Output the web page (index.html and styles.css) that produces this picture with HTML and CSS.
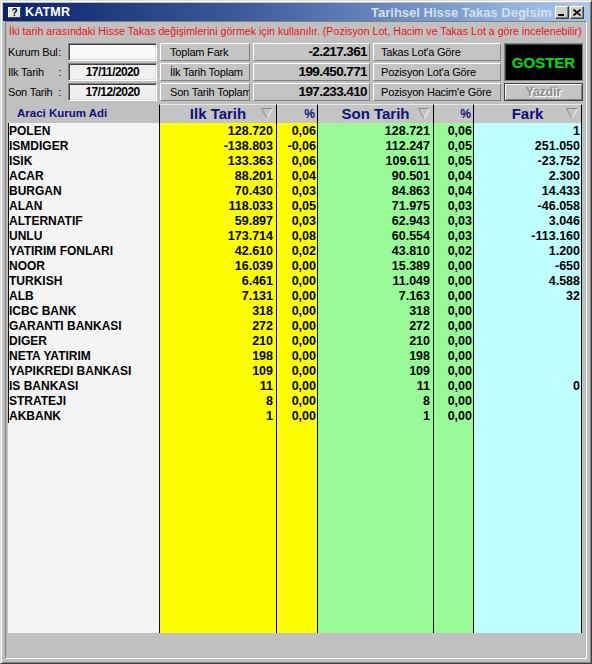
FILE: index.html
```html
<!DOCTYPE html>
<html lang="tr">
<head>
<meta charset="utf-8">
<title>KATMR</title>
<link rel="stylesheet" href="styles.css">
</head>
<body>
<div class="window">
  <div class="titlebar">
    <span class="ticon">?</span>
    <span class="tname">KATMR</span>
    <span class="tright">Tarihsel Hisse Takas Degisim</span>
    <span class="tbtns">
      <span class="tbtn"><svg width="8" height="7" viewBox="0 0 8 7"><rect x="0" y="5" width="6" height="2" fill="#000"/></svg></span>
      <span class="tbtn"><svg width="8" height="7" viewBox="0 0 8 7"><path d="M0.5 0.5L7.5 6.5M7.5 0.5L0.5 6.5" stroke="#000" stroke-width="1.6"/></svg></span>
    </span>
  </div>
  <div class="panel">
    <div class="info">İki tarih arasındaki Hisse Takas değişimlerini görmek için kullanılır. (Pozisyon Lot, Hacim ve Takas Lot a göre incelenebilir)</div>
    <div class="controls">
      <div class="lab"><span>Kurum Bul</span><span>:</span></div>
      <div class="inp"></div>
      <div class="lbl">Toplam Fark</div>
      <div class="val">-2.217.361</div>
      <div class="btn">Takas Lot'a Göre</div>
      <div class="go">GOSTER</div>

      <div class="lab"><span>Ilk Tarih</span><span>:</span></div>
      <div class="inp date">17/11/2020</div>
      <div class="lbl">İlk Tarih Toplam</div>
      <div class="val">199.450.771</div>
      <div class="btn">Pozisyon Lot'a Göre</div>

      <div class="lab"><span>Son Tarih</span><span>:</span></div>
      <div class="inp date">17/12/2020</div>
      <div class="lbl">Son Tarih Toplam</div>
      <div class="val">197.233.410</div>
      <div class="btn">Pozisyon Hacim'e Göre</div>
      <div class="yaz">Yazdir</div>
    </div>

    <div class="grid">
      <div class="ghead">
        <div class="hc c-name hname">Araci Kurum Adi</div>
        <div class="hc c-ilk hbig">Ilk Tarih<svg class="tri" width="12" height="11" viewBox="0 0 12 11"><path d="M6 10.5L0.5 0.5H11.5" fill="none" stroke="#8c8c8c"/><path d="M11.5 0.5L6 10.5" fill="none" stroke="#f4f4f4"/></svg></div>
        <div class="hc c-p1 hpct">%</div>
        <div class="hc c-son hbig">Son Tarih<svg class="tri" width="12" height="11" viewBox="0 0 12 11"><path d="M6 10.5L0.5 0.5H11.5" fill="none" stroke="#8c8c8c"/><path d="M11.5 0.5L6 10.5" fill="none" stroke="#f4f4f4"/></svg></div>
        <div class="hc c-p2 hpct">%</div>
        <div class="hc c-fark hbig">Fark<svg class="tri" width="12" height="11" viewBox="0 0 12 11"><path d="M6 10.5L0.5 0.5H11.5" fill="none" stroke="#8c8c8c"/><path d="M11.5 0.5L6 10.5" fill="none" stroke="#f4f4f4"/></svg></div>
      </div>
      <div class="gbody">
        <div class="col c-name">
          <div class="nm">POLEN</div>
          <div class="nm">ISMDIGER</div>
          <div class="nm">ISIK</div>
          <div class="nm">ACAR</div>
          <div class="nm">BURGAN</div>
          <div class="nm">ALAN</div>
          <div class="nm">ALTERNATIF</div>
          <div class="nm">UNLU</div>
          <div class="nm">YATIRIM FONLARI</div>
          <div class="nm">NOOR</div>
          <div class="nm">TURKISH</div>
          <div class="nm">ALB</div>
          <div class="nm">ICBC BANK</div>
          <div class="nm">GARANTI BANKASI</div>
          <div class="nm">DIGER</div>
          <div class="nm">NETA YATIRIM</div>
          <div class="nm">YAPIKREDI BANKASI</div>
          <div class="nm">IS BANKASI</div>
          <div class="nm">STRATEJI</div>
          <div class="nm">AKBANK</div>
        </div>
        <div class="col c-ilk">
          <div class="num">128.720</div>
          <div class="num">-138.803</div>
          <div class="num">133.363</div>
          <div class="num">88.201</div>
          <div class="num">70.430</div>
          <div class="num">118.033</div>
          <div class="num">59.897</div>
          <div class="num">173.714</div>
          <div class="num">42.610</div>
          <div class="num">16.039</div>
          <div class="num">6.461</div>
          <div class="num">7.131</div>
          <div class="num">318</div>
          <div class="num">272</div>
          <div class="num">210</div>
          <div class="num">198</div>
          <div class="num">109</div>
          <div class="num">11</div>
          <div class="num">8</div>
          <div class="num">1</div>
        </div>
        <div class="col c-p1">
          <div class="num">0,06</div>
          <div class="num">-0,06</div>
          <div class="num">0,06</div>
          <div class="num">0,04</div>
          <div class="num">0,03</div>
          <div class="num">0,05</div>
          <div class="num">0,03</div>
          <div class="num">0,08</div>
          <div class="num">0,02</div>
          <div class="num">0,00</div>
          <div class="num">0,00</div>
          <div class="num">0,00</div>
          <div class="num">0,00</div>
          <div class="num">0,00</div>
          <div class="num">0,00</div>
          <div class="num">0,00</div>
          <div class="num">0,00</div>
          <div class="num">0,00</div>
          <div class="num">0,00</div>
          <div class="num">0,00</div>
        </div>
        <div class="col c-son">
          <div class="num">128.721</div>
          <div class="num">112.247</div>
          <div class="num">109.611</div>
          <div class="num">90.501</div>
          <div class="num">84.863</div>
          <div class="num">71.975</div>
          <div class="num">62.943</div>
          <div class="num">60.554</div>
          <div class="num">43.810</div>
          <div class="num">15.389</div>
          <div class="num">11.049</div>
          <div class="num">7.163</div>
          <div class="num">318</div>
          <div class="num">272</div>
          <div class="num">210</div>
          <div class="num">198</div>
          <div class="num">109</div>
          <div class="num">11</div>
          <div class="num">8</div>
          <div class="num">1</div>
        </div>
        <div class="col c-p2">
          <div class="num">0,06</div>
          <div class="num">0,05</div>
          <div class="num">0,05</div>
          <div class="num">0,04</div>
          <div class="num">0,04</div>
          <div class="num">0,03</div>
          <div class="num">0,03</div>
          <div class="num">0,03</div>
          <div class="num">0,02</div>
          <div class="num">0,00</div>
          <div class="num">0,00</div>
          <div class="num">0,00</div>
          <div class="num">0,00</div>
          <div class="num">0,00</div>
          <div class="num">0,00</div>
          <div class="num">0,00</div>
          <div class="num">0,00</div>
          <div class="num">0,00</div>
          <div class="num">0,00</div>
          <div class="num">0,00</div>
        </div>
        <div class="col c-fark">
          <div class="num">1</div>
          <div class="num">251.050</div>
          <div class="num">-23.752</div>
          <div class="num">2.300</div>
          <div class="num">14.433</div>
          <div class="num">-46.058</div>
          <div class="num">3.046</div>
          <div class="num">-113.160</div>
          <div class="num">1.200</div>
          <div class="num">-650</div>
          <div class="num">4.588</div>
          <div class="num">32</div>
          <div class="num"></div>
          <div class="num"></div>
          <div class="num"></div>
          <div class="num"></div>
          <div class="num"></div>
          <div class="num">0</div>
          <div class="num"></div>
          <div class="num"></div>
        </div>
      </div>
    </div>
  </div>
</div>
</body>
</html>
```
FILE: styles.css
```css
* { box-sizing: border-box; }
html, body { margin: 0; padding: 0; }
body {
  width: 592px;
  height: 664px;
  overflow: hidden;
  background: #c0c0c0;
  font-family: "Liberation Sans", Arial, sans-serif;
  color: #000;
}
.window {
  width: 592px;
  height: 664px;
  display: flex;
  flex-direction: column;
  padding: 2px;
  background: #c0c0c0;
  border: 1px solid;
  border-color: #dfdfdf #404040 #404040 #dfdfdf;
  box-shadow: inset 1px 1px #ffffff, inset -1px -1px #808080;
}

/* title bar */
.titlebar {
  height: 18px;
  flex: 0 0 18px;
  display: flex;
  align-items: center;
  background: linear-gradient(to right, #0a246a 0%, #3a5a9a 40%, #a6caf0 100%);
}
.ticon {
  width: 13px;
  height: 11px;
  margin-left: 5px;
  background: #e4e4e4;
  border: 1px solid;
  border-color: #ffffff #404040 #404040 #ffffff;
  font-weight: bold;
  font-size: 10px;
  line-height: 9px;
  text-align: center;
  color: #000;
}
.tname {
  margin-left: 4px;
  color: #ffffff;
  font-weight: bold;
  font-size: 12.5px;
  letter-spacing: 0.2px;
}
.tright {
  margin-left: auto;
  width: 184px;
  overflow: hidden;
  white-space: nowrap;
  color: #d9dfea;
  font-weight: bold;
  font-size: 13px;
}
.tbtns {
  display: flex;
  gap: 1px;
  margin-right: 5px;
}
.tbtn {
  width: 14px;
  height: 13px;
  background: #d4d0c8;
  border: 1px solid;
  border-color: #ffffff #404040 #404040 #ffffff;
  box-shadow: inset -1px -1px #808080;
  display: flex;
  align-items: center;
  justify-content: center;
}

/* content panel */
.panel {
  flex: 1;
  margin: 0 2px 2px 2px;
  border: 1px solid;
  border-color: #808080 #ffffff #ffffff #808080;
  display: flex;
  flex-direction: column;
}
.info {
  height: 19px;
  line-height: 19px;
  padding-left: 3px;
  color: #f01010;
  font-size: 10.65px;
  white-space: nowrap;
  overflow: hidden;
}

/* controls */
.controls {
  margin-top: 2px;
  padding-left: 2px;
  display: grid;
  grid-template-columns: 57px 89px 90px 117px 128px 79px;
  grid-template-rows: 18px 18px 18px;
  column-gap: 3px;
  row-gap: 2px;
  font-size: 11px;
  letter-spacing: -0.2px;
}
.lab {
  display: flex;
  justify-content: space-between;
  align-items: center;
  padding-right: 4px;
}
.inp {
  background: #f8f8f8;
  border: 1px solid;
  border-color: #808080 #ffffff #ffffff #808080;
  box-shadow: inset 1px 1px #404040, inset -1px -1px #dfdfdf;
}
.inp.date {
  background: #f0f0f0;
  text-align: center;
  line-height: 16px;
  font-weight: bold;
  font-size: 12px;
  letter-spacing: -0.6px;
}
.lbl, .val, .btn {
  background: #c4c4c4;
  border: 1px solid;
  border-color: #ffffff #808080 #808080 #ffffff;
  white-space: nowrap;
  overflow: hidden;
  line-height: 16px;
}
.lbl { padding-left: 9px; }
.btn { padding-left: 7px; }
.val {
  text-align: right;
  padding-right: 2px;
  font-weight: bold;
  font-size: 13.5px;
  letter-spacing: -0.6px;
}
.go {
  grid-row: 1 / span 2;
  grid-column: 6;
  background: #000000;
  border: 1px solid #808080;
  box-shadow: inset 1px 1px #404040;
  color: #00e000;
  font-weight: bold;
  font-size: 15px;
  letter-spacing: 0;
  display: flex;
  align-items: center;
  justify-content: center;
}
.yaz {
  grid-row: 3;
  grid-column: 6;
  background: #c4c4c4;
  border: 1px solid #404040;
  box-shadow: inset 1px 1px #ffffff, inset -1px -1px #808080;
  color: #8c8c8c;
  text-shadow: 1px 1px #ffffff;
  font-weight: bold;
  font-size: 12px;
  letter-spacing: 0;
  display: flex;
  align-items: center;
  justify-content: center;
}

/* data grid */
.grid {
  margin: 3px 0 0 2px;
  width: 574px;
}
.ghead, .gbody { display: flex; }
.ghead { height: 19px; }
.gbody { height: 510px; }
.c-name { width: 151px; }
.c-ilk { width: 117px; }
.c-p1 { width: 41px; }
.c-son { width: 116px; }
.c-p2 { width: 40px; }
.c-fark { width: 109px; border-right: 1px solid #000; }
.c-ilk, .c-p1, .c-son, .c-p2, .c-fark { border-left: 1px solid #000; }

.hc {
  position: relative;
  height: 19px;
  background: #c4c4c4;
  color: #10107a;
  font-weight: bold;
  white-space: nowrap;
}
.hc.c-ilk, .hc.c-p1, .hc.c-son, .hc.c-p2, .hc.c-fark { border-top: 1px solid #e8e8e8; }
.hname {
  background: #c0c0c0;
  font-size: 11.5px;
  line-height: 19px;
  padding-left: 9px;
}
.hbig {
  font-size: 15px;
  line-height: 18px;
  text-align: center;
}
.hpct {
  font-size: 12px;
  line-height: 18px;
  text-align: right;
  padding-right: 2px;
}
.tri {
  position: absolute;
  right: 3px;
  top: 3px;
}

.col { height: 510px; }
.col.c-name { background: #f4f4f4; }
.col.c-ilk, .col.c-p1 { background: #ffff00; }
.col.c-son, .col.c-p2 { background: #98fb98; }
.col.c-fark { background: #c0ffff; }

.nm, .num {
  height: 15px;
  line-height: 16px;
  font-weight: bold;
  white-space: nowrap;
}
.nm {
  font-size: 12px;
  border-left: 1px solid #000;
}
.num {
  font-size: 12.5px;
  text-align: right;
}
.col.c-ilk .num, .col.c-son .num { padding-right: 3px; }
.col.c-p1 .num, .col.c-p2 .num, .col.c-fark .num { padding-right: 1px; }
```
